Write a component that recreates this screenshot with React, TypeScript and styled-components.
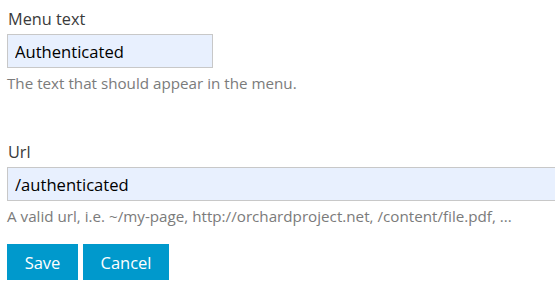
import React from "react";
import styled, { createGlobalStyle } from "styled-components";

const Global = createGlobalStyle`
  html, body { margin: 0; padding: 0; background: #fff; overflow: hidden; }
  body { font-family: "Open Sans", "Noto Sans", sans-serif; }
`;

const Form = styled.form`
  display: flex;
  flex-direction: column;
  padding: 8px 0 0 7px;
  width: 560px;
`;

const Field = styled.div<{ $gap?: number }>`
  display: flex;
  flex-direction: column;
  margin-bottom: ${(p) => p.$gap ?? 0}px;
`;

const Label = styled.label`
  font-size: 16.3px;
  line-height: 22px;
  color: #3a3a3a;
  margin: 0 0 4px 1px;
`;

const Input = styled.input<{ $w: number }>`
  box-sizing: border-box;
  width: ${(p) => p.$w}px;
  height: 34px;
  background: #e8f0fe;
  border: 1px solid #c8c8c8;
  border-radius: 0;
  padding: 0 7px;
  font-family: inherit;
  font-size: 16.6px;
  color: #000;
  outline: none;
`;

const Hint = styled.span`
  font-size: 15.2px;
  line-height: 18px;
  color: #7b7b7b;
  margin: 6px 0 0 0;
`;

const Actions = styled.div`
  display: flex;
  gap: 5px;
`;

const Button = styled.button<{ $w: number }>`
  width: ${(p) => p.$w}px;
  height: 36px;
  background: #0099cc;
  color: #fff;
  border: none;
  font-family: inherit;
  font-size: 16.5px;
  padding: 0;
  cursor: pointer;
`;

export default function App() {
  return (
    <>
      <Global />
      <Form onSubmit={(e) => e.preventDefault()}>
        <Field $gap={49}>
          <Label>Menu text</Label>
          <Input $w={206} defaultValue="Authenticated" />
          <Hint>The text that should appear in the menu.</Hint>
        </Field>
        <Field $gap={19}>
          <Label>Url</Label>
          <Input $w={560} defaultValue="/authenticated" />
          <Hint>A valid url, i.e. ~/my-page, http://orchardproject.net, /content/file.pdf, ...</Hint>
        </Field>
        <Actions>
          <Button $w={71}>Save</Button>
          <Button $w={86}>Cancel</Button>
        </Actions>
      </Form>
    </>
  );
}
